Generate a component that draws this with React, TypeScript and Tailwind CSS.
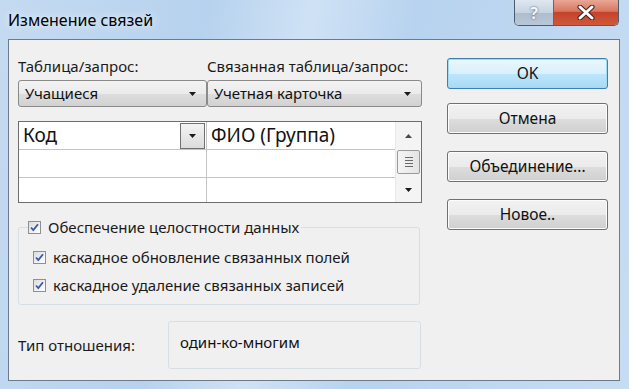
import React from 'react';

const font = { fontFamily: '"Noto Sans", "Open Sans", sans-serif' };

function Arrow({ className = '' }: { className?: string }) {
  return (
    <svg className={className} width="7" height="4" viewBox="0 0 7 4">
      <path d="M0 0h7L3.5 4z" fill="#1a1a1a" />
    </svg>
  );
}

function Combo({ value, width }: { value: string; width: string }) {
  return (
    <div
      className={`${width} h-[27px] flex items-center justify-between pl-[6px] pr-[10px] rounded-[3px] border border-[#8a8a8a] bg-[linear-gradient(#f3f3f3_0%,#ebebeb_50%,#dddddd_51%,#d2d2d2_100%)] text-[15px] text-[#111]`}
    >
      <span>{value}</span>
      <Arrow />
    </div>
  );
}

function Check({ label, className = '' }: { label: string; className?: string }) {
  return (
    <div className={`flex items-center gap-[7px] ${className}`}>
      <div className="w-[13px] h-[13px] border border-[#8e8f8f] bg-[linear-gradient(135deg,#dcdcdc,#ffffff)] flex items-center justify-center">
        <svg width="9" height="9" viewBox="0 0 9 9">
          <path d="M1 4.5l2.3 2.6L8 1.2" fill="none" stroke="#3b5aa6" strokeWidth="1.8" />
        </svg>
      </div>
      <span className="text-[15px] text-[#1a1a1a] leading-[20px]">{label}</span>
    </div>
  );
}

function Btn({ label, primary = false, className = '' }: { label: string; primary?: boolean; className?: string }) {
  return (
    <div
      className={`w-[161px] h-[31px] rounded-[3px] border flex items-center justify-center text-[15.5px] text-[#111] ${
        primary
          ? 'border-[#3c7fb1] shadow-[inset_0_0_0_1px_#9ddcf7] bg-[linear-gradient(#eaf6fd_0%,#d9f0fc_50%,#bee6fd_51%,#a7d9f5_100%)]'
          : 'border-[#707070] shadow-[inset_0_0_0_1px_#fcfcfc] bg-[linear-gradient(#f2f2f2_0%,#ebebeb_50%,#dddddd_51%,#cfcfcf_100%)]'
      } ${className}`}
    >
      {label}
    </div>
  );
}

export default function App() {
  return (
    <div
      style={font}
      className="w-[629px] h-[389px] overflow-hidden flex flex-col bg-[linear-gradient(100deg,#c4daf1_0%,#b7d2ee_30%,#cfe2f5_45%,#b8d3ef_60%,#c6dcf3_100%)]"
    >
      {/* Title bar */}
      <div className="h-[39px] flex items-start justify-between pl-[8px] pr-[10px]">
        <div className="text-[16px] text-black leading-[22px] mt-[9px] [text-shadow:0_0_8px_#ffffff]">Изменение связей</div>
        <div className="flex h-[26px] rounded-b-[5px] border border-t-0 border-[#4b5c70] overflow-hidden">
          <div className="w-[39px] flex items-center justify-center bg-[linear-gradient(#dfe8f1_0%,#c6d3e0_50%,#aebccb_51%,#b8c8d8_100%)] border-r border-[#5a6a7c]">
            <span className="text-[16px] font-bold text-[#f4f7fa] [text-shadow:0_0_2px_#3a4a5c]">?</span>
          </div>
          <div className="w-[64px] flex items-center justify-center bg-[linear-gradient(#e8a795_0%,#d9765f_45%,#c4432a_50%,#d0583b_100%)]">
            <svg width="18" height="15" viewBox="0 0 18 15">
              <path d="M3 2l12 11M15 2L3 13" stroke="#3b2420" strokeWidth="5" strokeLinecap="round" />
              <path d="M3 2l12 11M15 2L3 13" stroke="#ffffff" strokeWidth="3" strokeLinecap="round" />
            </svg>
          </div>
        </div>
      </div>

      {/* Client area */}
      <div className="ml-[8px] w-[612px] h-[342px] bg-[#f0f0f0] border border-[#6b7b8c] flex pt-[16px] pl-[9px]">
        {/* Left */}
        <div className="w-[404px] flex flex-col">
          <div className="flex">
            <div className="w-[189px] flex flex-col">
              <div className="h-[24px] leading-[20px] text-[15px] text-[#1a1a1a]">Таблица/запрос:</div>
              <Combo value="Учащиеся" width="w-[189px]" />
            </div>
            <div className="w-[215px] flex flex-col">
              <div className="h-[24px] leading-[20px] text-[15px] text-[#1a1a1a]">Связанная таблица/запрос:</div>
              <Combo value="Учетная карточка" width="w-[215px]" />
            </div>
          </div>

          {/* Join grid */}
          <div className="mt-[14px] h-[82px] border border-[#6d6d6d] bg-white flex">
            <div className="flex-1 flex flex-col">
              {[0, 1, 2].map((r) => (
                <div key={r} className={`flex ${r < 2 ? 'h-[28px] border-b border-[#c4c4c4]' : 'flex-1'}`}>
                  <div className="w-[188px] border-r border-[#c4c4c4] flex items-center justify-between pl-[4px] pr-[1px]">
                    {r === 0 && (
                      <>
                        <span className="text-[19px] text-[#111]">Код</span>
                        <div className="w-[25px] h-[26px] border border-[#707070] bg-[linear-gradient(#f3f3f3,#dcdcdc)] flex items-center justify-center">
                          <Arrow />
                        </div>
                      </>
                    )}
                  </div>
                  <div className="flex-1 flex items-center pl-[4px]">
                    {r === 0 && <span className="text-[19px] text-[#111]">ФИО (Группа)</span>}
                  </div>
                </div>
              ))}
            </div>
            {/* Scrollbar */}
            <div className="w-[26px] bg-[#f4f4f4] border-l border-[#e8e8e8] flex flex-col items-center">
              <div className="h-[28px] flex items-center justify-center">
                <svg width="7" height="4" viewBox="0 0 7 4">
                  <path d="M0 4h7L3.5 0z" fill="#4a4a4a" />
                </svg>
              </div>
              <div className="w-[23px] h-[24px] rounded-[2px] border border-[#9a9a9a] bg-[linear-gradient(90deg,#f4f4f4,#e4e4e4)] flex flex-col items-center justify-center gap-[2px]">
                <div className="w-[8px] h-px bg-[#6a6a6a]" />
                <div className="w-[8px] h-px bg-[#6a6a6a]" />
                <div className="w-[8px] h-px bg-[#6a6a6a]" />
                <div className="w-[8px] h-px bg-[#6a6a6a]" />
              </div>
              <div className="flex-1 flex items-end pb-[10px]">
                <Arrow />
              </div>
            </div>
          </div>

          {/* Integrity group */}
          <div className="relative mt-[24px] h-[78px] w-[402px] border border-[#d5dfe5] rounded-[3px]">
            <div className="absolute -top-[11px] left-[9px] pr-[2px] bg-[#f0f0f0]">
              <Check label="Обеспечение целостности данных" />
            </div>
            <Check label="каскадное обновление связанных полей" className="mt-[19px] ml-[14px]" />
            <Check label="каскадное удаление связанных записей" className="mt-[8px] ml-[14px]" />
          </div>

          {/* Relationship type */}
          <div className="mt-[16px] flex items-center">
            <div className="w-[150px] text-[15px] text-[#1a1a1a]">Тип отношения:</div>
            <div className="w-[253px] h-[48px] border border-[#d5dfe5] rounded-[3px] pl-[11px] pt-[10px] text-[15px] text-[#111] leading-[20px]">
              один-ко-многим
            </div>
          </div>
        </div>

        {/* Right buttons */}
        <div className="ml-[25px] flex flex-col pt-[2px]">
          <Btn label="OK" primary />
          <Btn label="Отмена" className="mt-[14px] h-[30px]" />
          <Btn label="Объединение..." className="mt-[17px]" />
          <Btn label="Новое.." className="mt-[17px] h-[30px]" />
        </div>
      </div>
    </div>
  );
}
